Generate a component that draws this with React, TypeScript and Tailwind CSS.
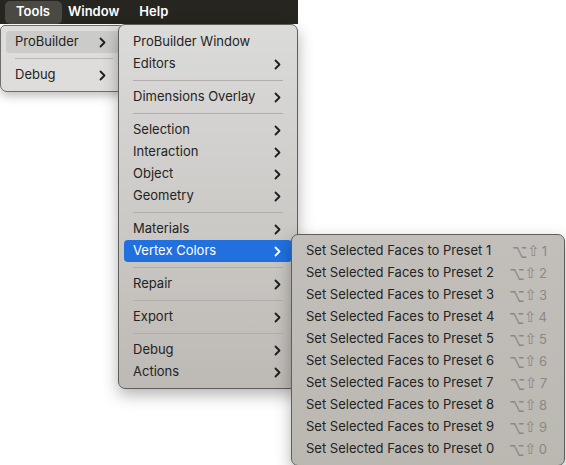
import type { ReactNode } from 'react';

const FONT = "font-['Inter','Liberation_Sans',sans-serif]";

function Chevron({ white = false }: { white?: boolean }) {
  return (
    <svg width="7" height="11" viewBox="0 0 7 11" className="shrink-0">
      <path
        d="M1.5 1.5 L5.5 5.5 L1.5 9.5"
        fill="none"
        stroke={white ? '#ffffff' : '#1e1e1e'}
        strokeWidth={1.8}
        strokeLinecap="round"
        strokeLinejoin="round"
      />
    </svg>
  );
}

function Row({
  label,
  sub = false,
  active = false,
  children,
}: {
  label: string;
  sub?: boolean;
  active?: boolean;
  children?: ReactNode;
}) {
  const bg = active ? 'bg-[#2170de] text-white' : 'text-[#232323]';
  return (
    <div className={`mx-[5px] h-[22px] flex items-center justify-between pl-[9px] pr-[11px] rounded-[4px] ${bg}`}>
      <span className="whitespace-nowrap">{label}</span>
      {sub && <Chevron white={active} />}
      {children}
    </div>
  );
}

function Sep() {
  return (
    <div className="h-[11px] flex items-center mx-[14px]">
      <div className="h-px w-full bg-[#b0aeab]" />
    </div>
  );
}

const presets = ['1', '2', '3', '4', '5', '6', '7', '8', '9', '0'];

export default function App() {
  return (
    <div className={`relative w-[566px] h-[465px] bg-white overflow-hidden text-[13px] ${FONT}`}>
      {/* menu bar */}
      <div className="w-[298px] h-[24px] bg-[#26251f] flex items-center pl-[5px] text-white font-semibold">
        <div className="h-[23px] w-[57px] pl-[11px] flex items-center rounded-[5px] bg-[#4a4944]">Tools</div>
        <div className="ml-[6px]">Window</div>
        <div className="ml-[20px]">Help</div>
      </div>

      {/* Tools menu */}
      <div className="absolute left-0 top-[25px] w-[124px] pt-[5px] pb-[5px] bg-[#dedddb] border border-[#6e6d6a] rounded-b-[7px] rounded-t-[5px] shadow-[0_4px_10px_rgba(0,0,0,0.25)]">
        <div className="ml-[5px] h-[22px] flex items-center pl-[9px] pr-[17px] justify-between rounded-[4px] bg-[#cbcbc9] text-[#232323]">
          <span>ProBuilder</span>
          <Chevron />
        </div>
        <div className="h-[11px] flex items-center ml-[14px] mr-[10px]">
          <div className="h-px w-full bg-[#b8b7b4]" />
        </div>
        <div className="ml-[5px] h-[22px] flex items-center pl-[9px] pr-[17px] justify-between text-[#232323]">
          <span>Debug</span>
          <Chevron />
        </div>
      </div>

      {/* ProBuilder menu */}
      <div className="absolute left-[118px] top-[24px] w-[180px] pt-[6px] pb-[5px] bg-gradient-to-b from-[#dbdbda] via-[#cdcbc8] to-[#bdb9b4] border border-[#5f5e5b] rounded-[7px] shadow-[0_6px_16px_rgba(0,0,0,0.3)]">
        <Row label="ProBuilder Window" />
        <Row label="Editors" sub />
        <Sep />
        <Row label="Dimensions Overlay" sub />
        <Sep />
        <Row label="Selection" sub />
        <Row label="Interaction" sub />
        <Row label="Object" sub />
        <Row label="Geometry" sub />
        <Sep />
        <Row label="Materials" sub />
        <Row label="Vertex Colors" sub active />
        <Sep />
        <Row label="Repair" sub />
        <Sep />
        <Row label="Export" sub />
        <Sep />
        <Row label="Debug" sub />
        <Row label="Actions" sub />
      </div>

      {/* Vertex Colors submenu */}
      <div className="absolute left-[291px] top-[234px] w-[274px] pt-[5px] pb-[5px] bg-gradient-to-b from-[#c2bfba] to-[#bbb7b1] border border-[#5f5e5b] rounded-[7px] shadow-[0_6px_16px_rgba(0,0,0,0.3)]">
        {presets.map((p) => (
          <div key={p} className="mx-[5px] h-[22px] flex items-center justify-between pl-[9px] pr-[12px] text-[#232323]">
            <span className="whitespace-nowrap">Set Selected Faces to Preset {p}</span>
            <span className="flex items-center text-[#8b8884] text-[13px] leading-none font-['DejaVu_Sans',sans-serif]">
              <span className="inline-block scale-y-150">⌥</span>
              <span className="text-[15px]">⇧</span>
              <span className="ml-[2px] text-[13px] font-['Inter',sans-serif]">{p}</span>
            </span>
          </div>
        ))}
      </div>
    </div>
  );
}
